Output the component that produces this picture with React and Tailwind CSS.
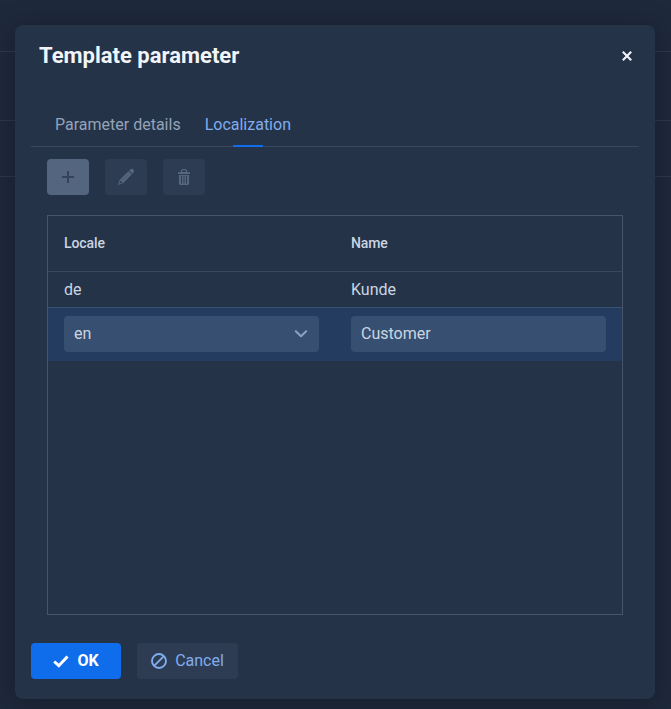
import React from "react";

function PencilIcon() {
  return (
    <svg width="18" height="18" viewBox="0 0 18 18" fill="currentColor">
      <path d="M12.7 2.1c1-1.5 2.6-1.6 3.6-.6s1 2.700-.5 3.700l-.6.500-3-3z" />
      <path fillRule="evenodd" d="M11.400 3.200l3.300 3.300-8.700 8.700L.900 17l1.700-5zM3.300 12.800l-.9 2.800 2.800-.9-.3-1.300-1.200-.2z" />
      <path d="M5 12.600l6.800-6.800" stroke="#3f4e65" strokeWidth=".6" />
    </svg>
  );
}

function TrashIcon() {
  return (
    <svg width="12" height="16" viewBox="0 0 12 16" fill="currentColor">
      <path fillRule="evenodd" d="M3 3V1.200L4.200 0h3.600L9 1.200V3h2.200l.8 1v1H0V4l.8-1zm1.200 0h3.600V1.200H4.200z" />
      <path fillRule="evenodd" d="M1 6h10v9l-1 1H2l-1-1zM3 7v7.500h1V7zm2.500 0v7.500h1V7zM8 7v7.500h1V7z" />
    </svg>
  );
}

function Toolbar() {
  return (
    <div className="mt-3 flex gap-4 px-4">
      <button className="flex h-9 w-[42px] items-center justify-center rounded bg-[#54657f] text-[#34435a]">
        <svg width="12" height="12" viewBox="0 0 12 12" fill="none" stroke="currentColor" strokeWidth="2">
          <path d="M6 0v12M0 6h12" />
        </svg>
      </button>
      <button className="flex h-9 w-[42px] items-center justify-center rounded bg-[#2d3c52] text-[#56667f]">
        <PencilIcon />
      </button>
      <button className="flex h-9 w-[42px] items-center justify-center rounded bg-[#2d3c52] text-[#56667f]">
        <TrashIcon />
      </button>
    </div>
  );
}

function LocaleTable() {
  return (
    <div className="mx-4 mt-5 h-[400px] border border-[#475569] text-[#cbd5e1]">
      <div className="grid h-14 grid-cols-2 items-center border-b border-[#38475d] pb-px text-sm font-medium tracking-[-0.1px]">
        <div className="pl-4">Locale</div>
        <div className="pl-4">Name</div>
      </div>
      <div className="grid h-9 grid-cols-2 items-center border-b border-[#365277]">
        <div className="pl-4">de</div>
        <div className="pl-4">Kunde</div>
      </div>
      <div className="grid h-[53px] grid-cols-2 items-start bg-[#233c5f] pt-2">
        <div className="px-4">
          <div className="flex h-9 items-center justify-between rounded bg-[#375071] pr-[11px] pl-2.5">
            <span>en</span>
            <svg width="14" height="10" viewBox="0 0 14 10" fill="none" stroke="#8da2c0" strokeWidth="2" strokeLinecap="round" strokeLinejoin="round">
              <path d="M1.800 2.200L7 7.200l5.200-5" />
            </svg>
          </div>
        </div>
        <div className="px-4">
          <div className="flex h-9 items-center rounded bg-[#375071] pl-2.5">Customer</div>
        </div>
      </div>
    </div>
  );
}

export default function App() {
  return (
    <div className="relative h-[709px] w-[671px] overflow-hidden bg-[#1e293b] font-['Roboto',sans-serif] text-base">
      <div className="h-[52px] border-b border-[#2e3b4e]" />
      <div className="h-[69px] border-b border-[#2e3b4e]" />
      <div className="h-14 border-b border-[#2e3b4e]" />
      <div className="absolute top-[25px] left-[15px] flex h-[674px] w-[640px] flex-col rounded-lg bg-[#243348] px-4 shadow-[0_4px_24px_rgba(15,20,30,0.5)]">
        <header className="flex h-[61px] items-center justify-between pr-[7px] pl-2">
          <h1 className="text-[22px] leading-7 font-bold text-[#f1f5f9]">Template parameter</h1>
          <svg width="10" height="10" viewBox="0 0 10 10" fill="none" stroke="#f1f5f9" strokeWidth="2.1">
            <path d="M.8.8l8.400 8.400M9.200.8L.8 9.200" />
          </svg>
        </header>
        <nav className="mt-4 flex h-[45px] gap-6 border-b border-[#38475d] pl-6">
          <span className="flex items-center pt-px text-[#94a3b8]">Parameter details</span>
          <span className="relative flex items-center pt-px text-[#81acee]">
            Localization
            <span className="absolute -bottom-px left-1/2 h-0.5 w-[30px] -translate-x-1/2 bg-[#0f6dec]" />
          </span>
        </nav>
        <Toolbar />
        <LocaleTable />
        <footer className="mt-7 flex gap-4">
          <button className="flex h-9 w-[90px] items-center justify-center gap-2 rounded bg-[#0f6dec] font-bold text-white">
            <svg width="16" height="13" viewBox="0 0 16 13" fill="none" stroke="currentColor" strokeWidth="3">
              <path d="M1.200 6.500l4.600 4.200 8.700-9.300" />
            </svg>
            OK
          </button>
          <button className="flex h-9 w-[101px] items-center justify-center gap-2 rounded bg-[#2d3c52] text-[#81acee]">
            <svg width="16" height="16" viewBox="0 0 16 16" fill="none" stroke="currentColor" strokeWidth="1.9">
              <circle cx="8" cy="8" r="7" />
              <path d="M3.100 12.900l9.800-9.800" />
            </svg>
            Cancel
          </button>
        </footer>
      </div>
    </div>
  );
}
